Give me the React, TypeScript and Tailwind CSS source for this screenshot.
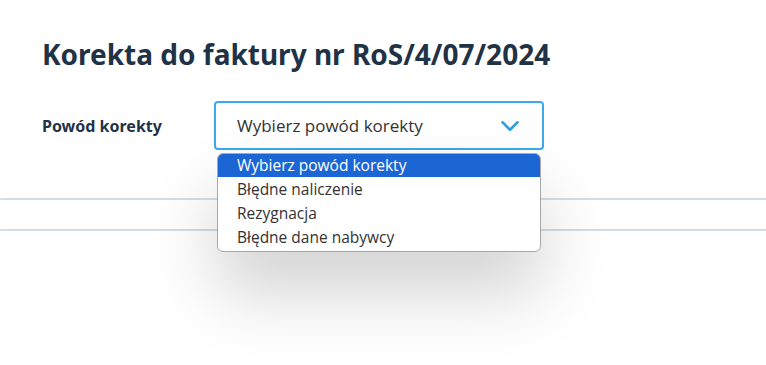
import { ChevronDown } from "lucide-react";

const options = ["Wybierz powód korekty", "Błędne naliczenie", "Rezygnacja", "Błędne dane nabywcy"];

export default function App() {
  return (
    <div className="relative h-[365px] w-[766px] overflow-hidden bg-white" style={{ fontFamily: '"Open Sans", "Noto Sans", sans-serif' }}>
      <div className="px-[42px] pt-[36px]">
        <h1 className="text-[28px] font-bold leading-[36px] text-[#1f3246]" style={{ fontFamily: '"Noto Sans", sans-serif' }}>
          Korekta do faktury nr RoS/4/07/2024
        </h1>
        <div className="mt-[29px] flex items-center">
          <label className="w-[172px] text-[16px] font-bold text-[#1f3246]" style={{ fontFamily: '"Noto Sans", sans-serif' }}>
            Powód korekty
          </label>
          <div className="relative w-[330px]">
            <div className="flex h-[49px] items-center justify-between rounded-[4px] border-2 border-[#3ba9ea] bg-white pl-[21px] pr-[17px] text-[17px] text-[#333]">
              <span>Wybierz powód korekty</span>
              <ChevronDown className="size-[30px] text-[#2a9fe6]" strokeWidth={2} />
            </div>
            <ul className="absolute left-[3px] top-[52px] z-10 w-[324px] overflow-hidden rounded-[6px] border border-[#a8a8a8] bg-white pb-[2px] shadow-[0_40px_70px_rgba(0,0,0,0.18)]">
              {options.map((o, i) => (
                <li
                  key={o}
                  className={
                    i === 0
                      ? "h-[23px] bg-[#1b66d4] pl-[19px] text-[15.5px] leading-[23px] text-white"
                      : "h-[24px] pl-[19px] text-[15.5px] leading-[24px] text-[#333]"
                  }
                >
                  {o}
                </li>
              ))}
            </ul>
          </div>
        </div>
      </div>
      <div className="mt-[48px] h-[2px] w-full rounded-l-full bg-[#d3dde6]" />
      <div className="mt-[29px] h-[2px] w-full rounded-l-full bg-[#d3dde6]" />
    </div>
  );
}
